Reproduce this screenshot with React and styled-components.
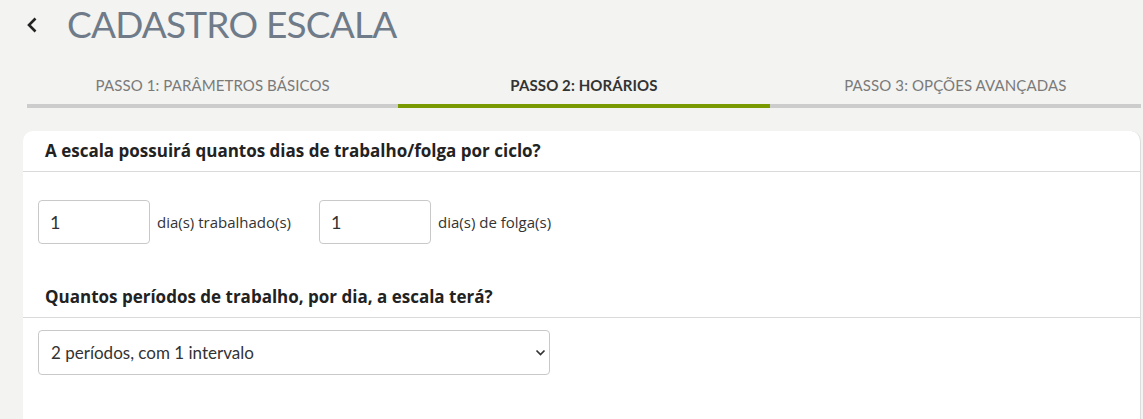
import React from 'react';
import styled, { createGlobalStyle } from 'styled-components';

const GlobalStyle = createGlobalStyle`
  html, body {
    margin: 0;
    padding: 0;
    background: #f3f3f1;
    font-family: 'Lato', sans-serif;
  }
  * { box-sizing: border-box; }
`;

const Page = styled.div`
  width: 1143px;
  height: 419px;
  overflow: hidden;
  display: flex;
  flex-direction: column;
`;

const Header = styled.div`
  display: flex;
  align-items: center;
  height: 46px;
  padding-left: 25px;
  gap: 28px;
`;

const BackButton = styled.button`
  border: none;
  background: none;
  padding: 0;
  width: 14px;
  height: 18px;
  margin-top: 4px;
  display: flex;
  align-items: center;
  cursor: pointer;
`;

const Title = styled.h1`
  margin: 0;
  font-family: 'Lato', sans-serif;
  font-weight: 400;
  font-size: 37px;
  color: #6f7b89;
  letter-spacing: -0.8px;
`;

const Tabs = styled.div`
  display: flex;
  margin: 14px 2px 0 27px;
`;

const Tab = styled.div`
  flex: 1;
  height: 48px;
  display: flex;
  align-items: center;
  justify-content: center;
  padding-top: 6px;
  font-size: 15px;
  letter-spacing: 0.1px;
  text-transform: uppercase;
  font-weight: ${p => (p.$active ? 700 : 400)};
  color: ${p => (p.$active ? '#333' : '#7a7a7a')};
  border-bottom: 4px solid ${p => (p.$active ? '#7a9a01' : '#cccccc')};
`;

const Card = styled.div`
  flex: 1;
  margin: 23px 2px 0 23px;
  background: #fff;
  border-radius: 10px 10px 0 0;
  border-right: 1px solid #dcdcdc;
  font-family: 'Open Sans', sans-serif;
`;

const SectionTitle = styled.div`
  height: 41px;
  padding: 0 0 2px 22px;
  display: flex;
  align-items: center;
  font-weight: 700;
  font-size: 17px;
  color: #222;
  border-bottom: 1px solid #dadada;
`;

const DaysRow = styled.div`
  display: flex;
  align-items: center;
  padding: 28px 15px 33px;
`;

const DayField = styled.label`
  display: flex;
  align-items: center;
  gap: 7px;
  margin-right: 28px;
  font-size: 15px;
  color: #333;
`;

const NumberInput = styled.input`
  width: 112px;
  height: 44px;
  border: 1px solid #c9c9c9;
  border-radius: 4px;
  padding: 0 11px;
  font-family: 'Lato', sans-serif;
  font-size: 18px;
  color: #333;
  outline: none;
`;

const SelectWrap = styled.div`
  position: relative;
  width: 512px;
  margin: 12px 0 0 15px;
`;

const Select = styled.select`
  appearance: none;
  width: 100%;
  height: 45px;
  border: 1px solid #c9c9c9;
  border-radius: 4px;
  padding: 0 12px;
  font-family: 'Lato', sans-serif;
  font-size: 17px;
  color: #333;
  background: #fff;
  outline: none;
`;

const Chevron = styled.svg`
  position: absolute;
  right: 4px;
  top: 19px;
  pointer-events: none;
`;

export default function App() {
  return (
    <Page>
      <GlobalStyle />
      <Header>
        <BackButton aria-label="Voltar">
          <svg width="14" height="18" viewBox="0 0 14 18">
            <path d="M10.5 2.5 L4 9 L10.5 15.5" fill="none" stroke="#222" strokeWidth="2.6" />
          </svg>
        </BackButton>
        <Title>CADASTRO ESCALA</Title>
      </Header>
      <Tabs>
        <Tab>Passo 1: Parâmetros Básicos</Tab>
        <Tab $active>Passo 2: Horários</Tab>
        <Tab>Passo 3: Opções Avançadas</Tab>
      </Tabs>
      <Card>
        <SectionTitle>A escala possuirá quantos dias de trabalho/folga por ciclo?</SectionTitle>
        <DaysRow>
          <DayField>
            <NumberInput type="text" defaultValue="1" />
            dia(s) trabalhado(s)
          </DayField>
          <DayField>
            <NumberInput type="text" defaultValue="1" />
            dia(s) de folga(s)
          </DayField>
        </DaysRow>
        <SectionTitle>Quantos períodos de trabalho, por dia, a escala terá?</SectionTitle>
        <SelectWrap>
          <Select defaultValue="2">
            <option value="1">1 período, sem intervalo</option>
            <option value="2">2 períodos, com 1 intervalo</option>
            <option value="3">3 períodos, com 2 intervalos</option>
          </Select>
          <Chevron width="11" height="7" viewBox="0 0 11 7">
            <path d="M1.5 1.5 L5.5 5.5 L9.5 1.5" fill="none" stroke="#333" strokeWidth="1.7" />
          </Chevron>
        </SelectWrap>
      </Card>
    </Page>
  );
}
